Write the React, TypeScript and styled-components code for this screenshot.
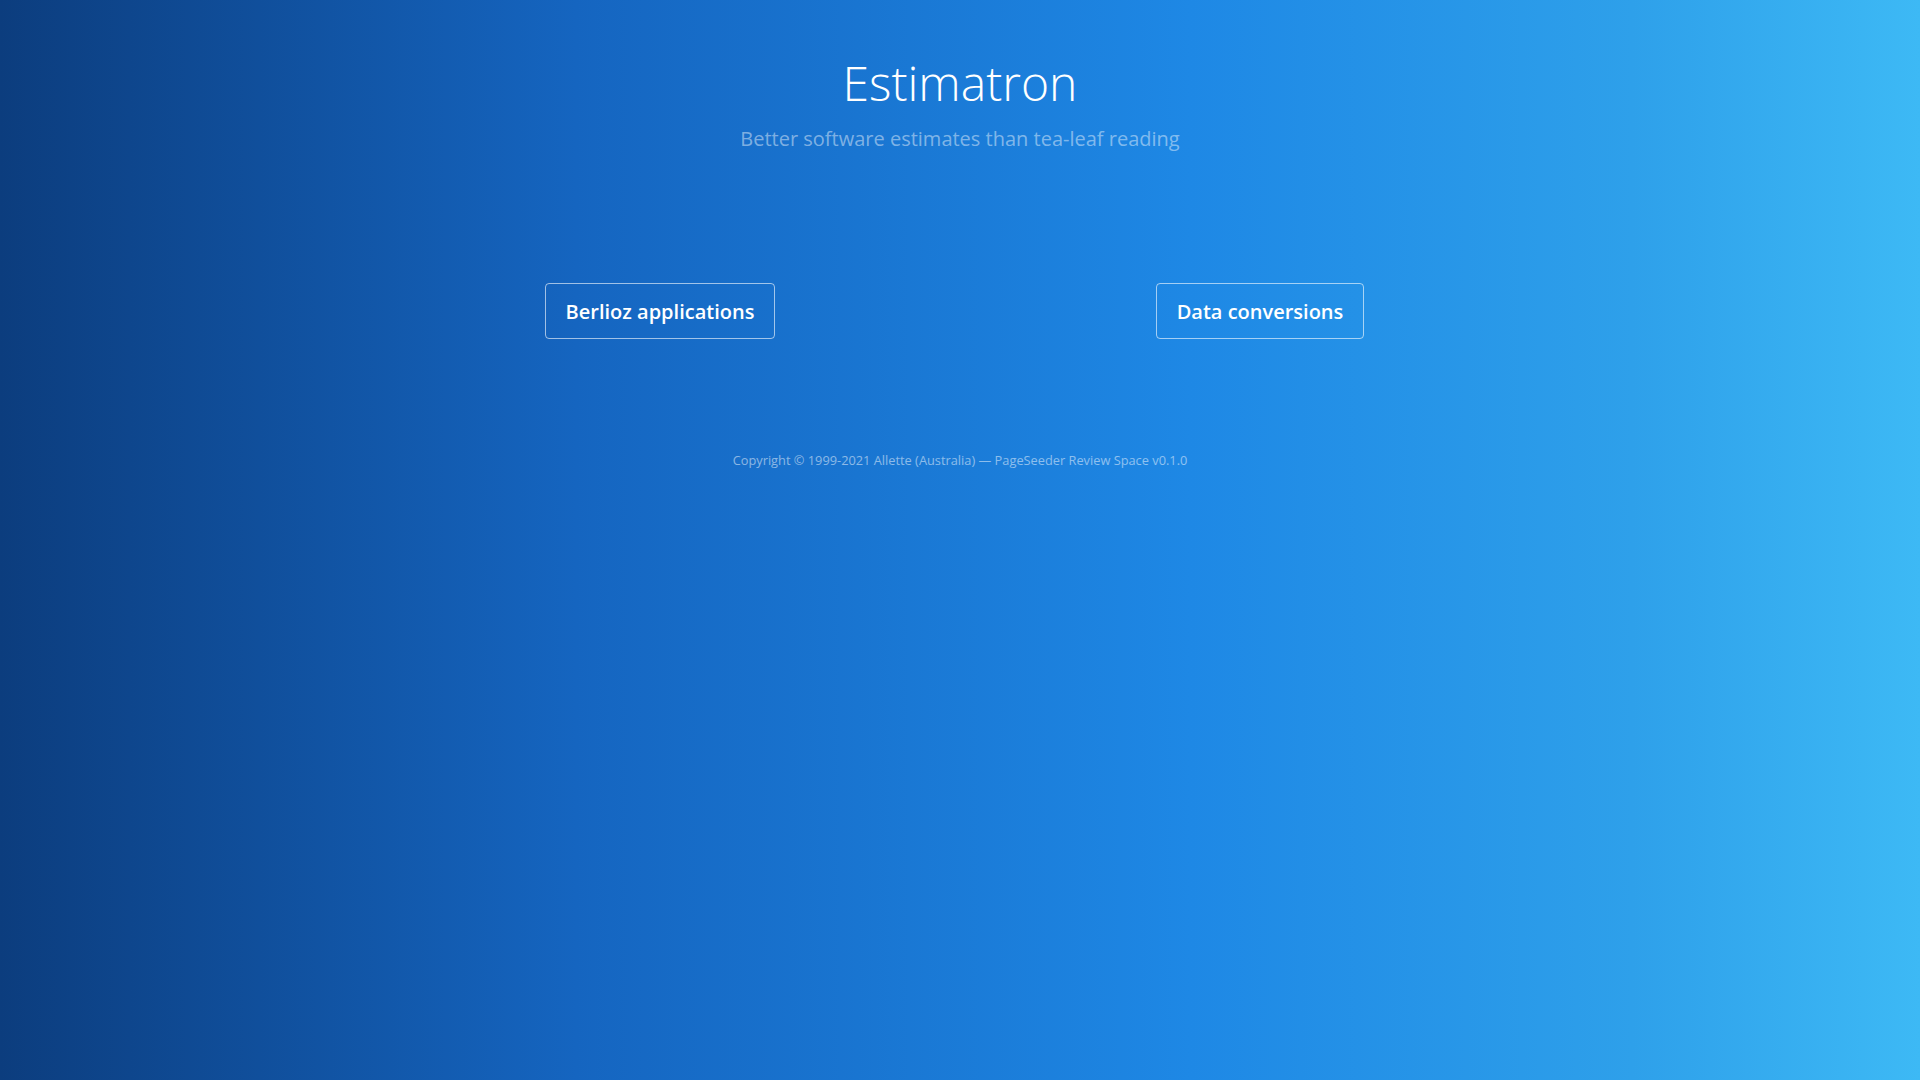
import React from "react";
import styled, { createGlobalStyle } from "styled-components";

const Global = createGlobalStyle`
  html, body { margin: 0; padding: 0; height: 100%; }
  body {
    font-family: "Open Sans", "Liberation Sans", sans-serif;
    background: linear-gradient(to right, #0c3d7e 0%, #1565c0 30%, #1e88e5 62%, #2ea0ea 85%, #3db9f5 100%);
    min-height: 100vh;
  }
  #root { min-height: 100vh; }
`;

const Page = styled.div`
  min-height: 100vh;
  display: flex;
  flex-direction: column;
  align-items: center;
  padding-top: 49px;
  box-sizing: border-box;
`;

const Header = styled.header`
  text-align: center;
`;

const Title = styled.h1`
  margin: 0;
  font-weight: 300;
  font-size: 48px;
  line-height: 68px;
  color: #ffffff;
`;

const Subtitle = styled.p`
  margin: 8px 0 0;
  font-size: 20px;
  line-height: 28px;
  color: rgba(255, 255, 255, 0.45);
`;

const Choices = styled.nav`
  width: 1200px;
  display: grid;
  grid-template-columns: 1fr 1fr;
  margin-top: 130px;
`;

const Cell = styled.div`
  display: flex;
  justify-content: center;
`;

const ChoiceButton = styled.a`
  display: inline-flex;
  align-items: center;
  height: 56px;
  box-sizing: border-box;
  padding: 0 20px;
  border: 1px solid rgba(255, 255, 255, 0.6);
  border-radius: 4px;
  color: #ffffff;
  font-size: 20px;
  font-weight: 600;
  text-decoration: none;
  cursor: pointer;
`;

const Footer = styled.footer`
  margin-top: 111px;
  font-size: 12.8px;
  line-height: 20px;
  color: rgba(255, 255, 255, 0.5);
`;

export default function App() {
  return (
    <>
      <Global />
      <Page>
        <Header>
          <Title>Estimatron</Title>
          <Subtitle>Better software estimates than tea-leaf reading</Subtitle>
        </Header>
        <Choices>
          <Cell>
            <ChoiceButton>Berlioz applications</ChoiceButton>
          </Cell>
          <Cell>
            <ChoiceButton>Data conversions</ChoiceButton>
          </Cell>
        </Choices>
        <Footer>Copyright © 1999-2021 Allette (Australia) — PageSeeder Review Space v0.1.0</Footer>
      </Page>
    </>
  );
}
